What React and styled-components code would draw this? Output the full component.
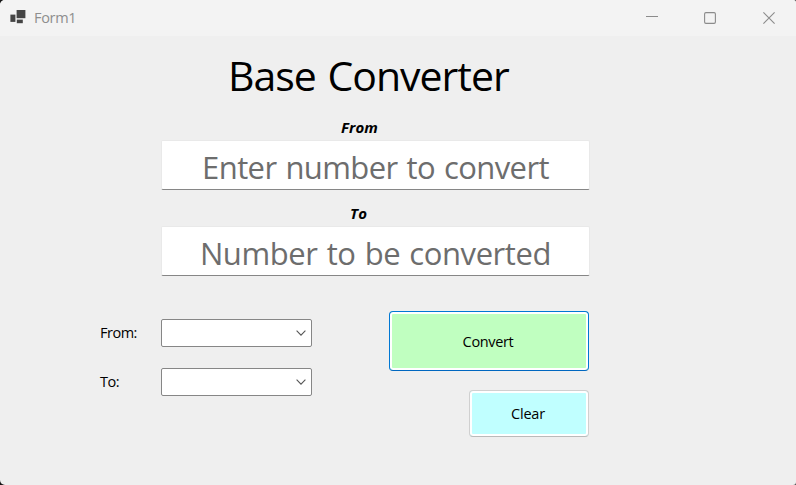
import React from "react";
import styled, { createGlobalStyle } from "styled-components";

const GlobalStyle = createGlobalStyle`
  *, *::before, *::after { box-sizing: border-box; }
  body {
    margin: 0;
    overflow: hidden;
    background: #efefef;
    font-family: "Segoe UI", "Open Sans", "Noto Sans", sans-serif;
    color: #000;
  }
`;

const Backdrop = styled.div`
  width: 796px;
  height: 485px;
  background: linear-gradient(90deg, #151515 50%, #505050 50%);
`;

const Window = styled.main`
  display: flex;
  flex-direction: column;
  height: 100%;
  overflow: hidden;
  border-radius: 5px 3px 3px 5px;
  background: #efefef;
`;

const TitleBar = styled.header`
  display: flex;
  align-items: center;
  flex: none;
  height: 36px;
  padding-left: 10px;
  background: #f3f3f3;
`;

const WindowName = styled.span`
  flex: 1;
  margin-left: 8px;
  font-size: 14.5px;
  line-height: 36px;
  letter-spacing: -0.3px;
  color: #8e8e8e;
`;

const CaptionButton = styled.button`
  display: grid;
  place-items: center;
  width: 58.5px;
  height: 36px;
  padding: 0;
  border: 0;
  background: transparent;
  color: #8b8b8b;
`;

const CaptionButtons = styled.div`
  display: flex;
  margin-right: -2px;
`;

const Heading = styled.h1`
  width: 290px;
  height: 80px;
  margin: 0 0 0 228px;
  font-size: 41px;
  font-weight: 400;
  line-height: 78px;
  letter-spacing: ${(p) => p.$spacing}px;
  word-spacing: 2px;
  white-space: nowrap;
`;

const Field = styled.label`
  display: block;
  width: 429px;
  margin: 0 0 12px 161px;
`;

const FieldName = styled.span`
  display: block;
  height: 24px;
  padding-left: ${(p) => p.$indent}px;
  font-size: 15px;
  font-style: italic;
  font-weight: 700;
  line-height: 22px;
  letter-spacing: ${(p) => p.$spacing}px;
`;

const NumberInput = styled.input`
  display: block;
  width: 100%;
  height: 50px;
  padding: 3px 0 0;
  border: 1px solid #e9e9e9;
  border-bottom-color: #868686;
  border-radius: 2px;
  outline: 0;
  background: #fff;
  font: 400 31px/44px "Segoe UI", "Open Sans", "Noto Sans", sans-serif;
  letter-spacing: ${(p) => p.$spacing}px;
  word-spacing: 1.5px;
  text-align: center;
  &::placeholder { color: #6d6d6d; opacity: 1; }
`;

const Controls = styled.section`
  display: flex;
  justify-content: space-between;
  width: 489px;
  margin: 23px 0 0 100px;
`;

const Selectors = styled.div`
  display: flex;
  flex-direction: column;
  gap: 21px;
  padding-top: 8px;
`;

const SelectorRow = styled.div`
  display: flex;
  align-items: center;
  height: 28px;
`;

const SelectorName = styled.span`
  width: 61px;
  font-size: 14.5px;
  line-height: 28px;
  letter-spacing: ${(p) => p.$spacing}px;
`;

const Combo = styled.button`
  display: flex;
  align-items: center;
  justify-content: flex-end;
  width: 151px;
  height: 28px;
  padding: 0 5px 0 0;
  border: 1px solid #868686;
  border-radius: 2px;
  background: #fff;
  color: #555;
`;

const Actions = styled.div`
  display: flex;
  flex-direction: column;
  align-items: flex-end;
  gap: 19px;
`;

const ActionButton = styled.button`
  width: ${(p) => p.$width}px;
  height: ${(p) => p.$height}px;
  padding: ${(p) => p.$drop || 0}px 2px 0 0;
  border: 1px solid ${(p) => p.$edge};
  border-bottom-color: ${(p) => p.$bottom};
  border-radius: 4px;
  background: ${(p) => p.$fill};
  box-shadow: inset 0 0 0 2px #fff;
  color: #000;
  font: 400 14.5px/20px "Segoe UI", "Open Sans", "Noto Sans", sans-serif;
  letter-spacing: ${(p) => p.$spacing}px;
`;

const FormIcon = () => (
  <svg width="16" height="16" viewBox="0 0 16 16" fill="#444" aria-hidden="true">
    <rect x="0.4" y="4.6" width="5" height="7.3" />
    <rect x="6.6" y="0" width="8.8" height="8.2" />
    <rect x="6.8" y="9.6" width="6" height="3.6" />
  </svg>
);

const Chevron = () => (
  <svg width="10" height="6" viewBox="0 0 10 6" fill="none" stroke="currentColor" strokeWidth="1.1" aria-hidden="true">
    <path d="M.6.7 5 5.1 9.4.7" />
  </svg>
);

export default function App() {
  return (
    <Backdrop>
      <GlobalStyle />
      <Window>
        <TitleBar>
          <FormIcon />
          <WindowName>Form1</WindowName>
          <CaptionButtons>
            <CaptionButton aria-label="Minimize">
              <svg width="12" height="12" fill="none" stroke="currentColor"><path d="M0 4.5h12" /></svg>
            </CaptionButton>
            <CaptionButton aria-label="Maximize">
              <svg width="12" height="12" fill="none" stroke="currentColor" strokeWidth="1.1"><rect x=".6" y=".6" width="10.8" height="10.8" rx="1.3" /></svg>
            </CaptionButton>
            <CaptionButton aria-label="Close">
              <svg width="12" height="12" fill="none" stroke="currentColor" strokeWidth="1.1"><path d="m.4.4 11.2 11.2M11.6.4.4 11.6" /></svg>
            </CaptionButton>
          </CaptionButtons>
        </TitleBar>
        <Heading $spacing={-1}>Base Converter</Heading>
        <Field>
          <FieldName $indent={180} $spacing={0.1}>From</FieldName>
          <NumberInput $spacing={-0.6} placeholder="Enter number to convert" />
        </Field>
        <Field>
          <FieldName $indent={189} $spacing={0.2}>To</FieldName>
          <NumberInput $spacing={-0.42} placeholder="Number to be converted" />
        </Field>
        <Controls>
          <Selectors>
            <SelectorRow>
              <SelectorName $spacing={-0.5}>From:</SelectorName>
              <Combo aria-label="From base"><Chevron /></Combo>
            </SelectorRow>
            <SelectorRow>
              <SelectorName $spacing={-0.5}>To:</SelectorName>
              <Combo aria-label="To base"><Chevron /></Combo>
            </SelectorRow>
          </Selectors>
          <Actions>
            <ActionButton $width={200} $height={60} $edge="#0078d4" $bottom="#0067c0" $fill="#c0ffc0" $spacing={-0.35} $drop={2}>Convert</ActionButton>
            <ActionButton $width={120} $height={47} $edge="#d0d0d0" $bottom="#bababa" $fill="#c0ffff" $spacing={-0.2}>Clear</ActionButton>
          </Actions>
        </Controls>
      </Window>
    </Backdrop>
  );
}
